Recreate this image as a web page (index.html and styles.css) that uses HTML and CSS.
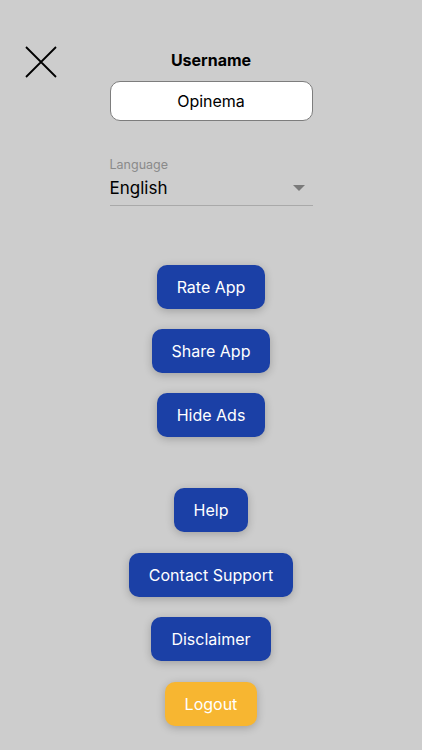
FILE: index.html
```html
<!DOCTYPE html>
<html lang="en">
<head>
<meta charset="utf-8">
<title>Settings</title>
<link rel="stylesheet" href="styles.css">
</head>
<body>
<div class="screen">
  <button class="close" aria-label="Close">
    <svg width="32" height="32" viewBox="0 0 32 32"><path d="M1 1 L31 31 M31 1 L1 31" stroke="#000" stroke-width="1.8" fill="none"/></svg>
  </button>
  <main class="content">
    <div class="user-title">Username</div>
    <div class="user-input">Opinema</div>
    <div class="lang">
      <div class="lang-label">Language</div>
      <div class="lang-row">
        <span class="lang-value">English</span>
        <span class="caret"></span>
      </div>
    </div>
    <div class="group first">
      <button class="btn">Rate App</button>
      <button class="btn">Share App</button>
      <button class="btn">Hide Ads</button>
    </div>
    <div class="group second">
      <button class="btn">Help</button>
      <button class="btn">Contact Support</button>
      <button class="btn">Disclaimer</button>
      <button class="btn logout">Logout</button>
    </div>
  </main>
</div>
</body>
</html>
```

FILE: styles.css
```css
html, body {
  margin: 0;
  padding: 0;
  background: #cdcdcd;
}
body {
  font-family: Inter, "Noto Sans", Roboto, sans-serif;
  color: #000;
}
.screen {
  position: relative;
  width: 422px;
  height: 750px;
  overflow: hidden;
}
.close {
  position: absolute;
  left: 25px;
  top: 46px;
  width: 32px;
  height: 32px;
  padding: 0;
  border: 0;
  background: none;
}
.close svg { display: block; }
.content {
  display: flex;
  flex-direction: column;
  align-items: center;
  padding-top: 50px;
}
.user-title {
  font-size: 16px;
  font-weight: 700;
  line-height: 20px;
}
.user-input {
  margin-top: 11px;
  box-sizing: border-box;
  width: 203px;
  height: 40px;
  border: 1px solid #7d7d7d;
  border-radius: 10px;
  background: #fff;
  display: flex;
  align-items: center;
  justify-content: center;
  font-size: 16px;
}
.lang {
  margin-top: 36px;
  width: 203px;
  border-bottom: 1px solid #a9a9a9;
  padding-bottom: 6px;
}
.lang-label {
  font-size: 12.5px;
  line-height: 16px;
  color: #8a8a8a;
}
.lang-row {
  margin-top: 4px;
  display: flex;
  align-items: center;
  justify-content: space-between;
  padding-right: 8px;
}
.lang-value {
  font-size: 17px;
  line-height: 22px;
}
.caret {
  width: 0;
  height: 0;
  border-left: 6px solid transparent;
  border-right: 6px solid transparent;
  border-top: 6px solid #7a7a7a;
}
.group {
  display: flex;
  flex-direction: column;
  align-items: center;
  gap: 20px;
}
.group.first { margin-top: 59px; }
.group.second { margin-top: 51px; gap: 20.7px; }
.btn {
  height: 44px;
  padding: 0 20px;
  border: 0;
  border-radius: 10px;
  background: #1b40a6;
  color: #fff;
  font-family: Inter, "Noto Sans", Roboto, sans-serif;
  font-size: 16px;
  font-weight: 400;
  box-shadow: 0 2px 8px rgba(0, 0, 0, 0.22);
}
.btn.logout {
  background: #f7b631;
}
```
